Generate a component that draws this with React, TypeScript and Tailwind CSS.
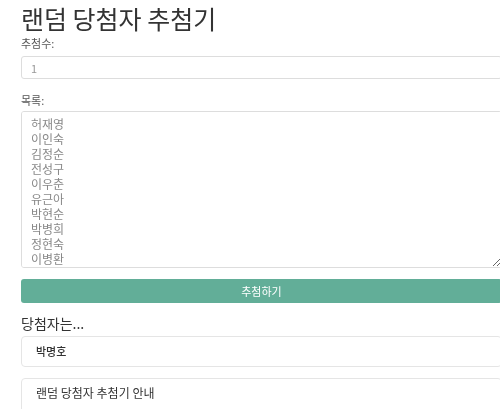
import React from 'react'

const names = ['허재영', '이인숙', '김정순', '전성구', '이우춘', '유근아', '박현순', '박병희', '정현숙', '이병환', '정명석', '김영수']

export default function App() {
  return (
    <div
      className="h-[409px] w-[500px] overflow-hidden bg-white text-[#333]"
      style={{ fontFamily: '"Noto Sans CJK KR", "Noto Sans", sans-serif' }}
    >
      <div className="ml-[21px] w-[481px]">
        <h1 className="pt-[2px] text-[25px] leading-[33px] font-normal text-[#333]">랜덤 당첨자 추첨기</h1>

        <label className="block text-[11px] leading-[16px] text-[#555]">추첨수:</label>
        <input
          type="text"
          placeholder="1"
          className="mt-[5px] block h-[23px] w-full rounded-[3px] border border-[#ddd] bg-white pl-[9px] text-[11px] outline-none placeholder:text-[#999]"
        />

        <label className="mt-[13px] block text-[11px] leading-[16px] text-[#555]">목록:</label>
        <textarea
          placeholder={names.join('\n')}
          className="mt-[3px] block h-[157px] w-full resize-y rounded-[3px] border border-[#ddd] bg-white px-[9px] pt-[4px] text-[12px] leading-[15px] outline-none placeholder:text-[#888]"
        />

        <button className="mt-[11px] block h-[24px] w-full rounded-[3px] bg-[#62ae98] text-[11px] text-white">
          추첨하기
        </button>

        <h2 className="mt-[9px] text-[14px] leading-[22px] font-normal text-[#333]">당첨자는...</h2>

        <div className="mt-[2px] flex h-[31px] items-center rounded-[4px] border border-[#e5e5e5] pl-[14px] text-[11px] font-medium text-[#333]">
          박명호
        </div>

        <div className="mt-[11px] h-[60px] rounded-[4px] border border-[#e5e5e5] pl-[14px] pt-[5px] text-[12px] leading-[18px] text-[#333]">
          랜덤 당첨자 추첨기 안내
        </div>
      </div>
    </div>
  )
}
